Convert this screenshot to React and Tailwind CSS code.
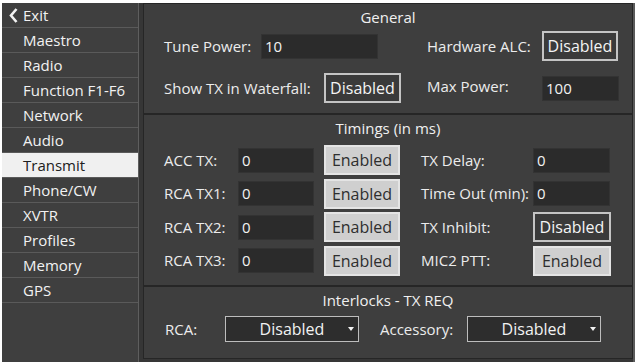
import React from "react";

const font = { fontFamily: '"Open Sans", "Liberation Sans", sans-serif' };

const navItems = [
  "Maestro",
  "Radio",
  "Function F1-F6",
  "Network",
  "Audio",
  "Transmit",
  "Phone/CW",
  "XVTR",
  "Profiles",
  "Memory",
  "GPS",
];

const Field = ({ value, className = "" }) => (
  <div
    className={`h-[25px] bg-[#2b2b2b] border border-[#333333] flex items-center pl-[3px] text-[15px] text-[#f2f2f2] ${className}`}
  >
    {value}
  </div>
);

const DarkButton = ({ children, className = "" }) => (
  <div
    className={`h-[30px] border-2 border-[#c4c4c4] bg-[#3a3a3a] flex items-center justify-center text-[16px] text-[#f4f4f4] ${className}`}
  >
    {children}
  </div>
);

const LightButton = ({ children, className = "" }) => (
  <div
    className={`h-[30px] border-2 border-[#e4e4e4] bg-[#cfcfcf] flex items-center justify-center text-[16px] text-[#2e2e2e] ${className}`}
  >
    {children}
  </div>
);

const Combo = ({ value }) => (
  <div className="relative w-[134px] h-[26px] border border-[#bdbdbd] bg-[#2d2d2d] flex items-center justify-center text-[16px] text-[#f2f2f2]">
    {value}
    <svg className="absolute right-[4px] top-[10px]" width="6" height="4" viewBox="0 0 6 4">
      <path d="M0 0 L6 0 L3 4 Z" fill="#f2f2f2" />
    </svg>
  </div>
);

const Label = ({ children, className = "" }) => (
  <div className={`text-[15px] text-[#ececec] shrink-0 ${className}`}>{children}</div>
);

const Panel = ({ title, className = "", children }) => (
  <div className={`border border-[#262626] bg-[#3e3e3e] flex flex-col ${className}`}>
    <div className="h-[22px] mt-[2px] flex items-center justify-center text-[15px] text-[#f0f0f0]">
      {title}
    </div>
    {children}
  </div>
);

export default function App() {
  return (
    <div
      className="w-[635px] h-[362px] bg-white pt-[3px] pl-[2px] flex overflow-hidden"
      style={font}
    >
      {/* Sidebar */}
      <div className="w-[137px] h-full bg-[#3f3f3f] border-r border-[#5e5e5e] flex flex-col">
        <div className="h-[25px] flex items-center border-b border-[#5a5a5a] text-[15px] text-[#f2f2f2]">
          <svg className="ml-[7px] mr-[5px]" width="9" height="15" viewBox="0 0 9 15">
            <polyline
              points="7.5,1 2,7.5 7.5,14"
              fill="none"
              stroke="#f2f2f2"
              strokeWidth="2.6"
            />
          </svg>
          Exit
        </div>
        {navItems.map((item) => (
          <div
            key={item}
            className={`h-[25px] flex items-center pl-[21px] border-b border-[#5a5a5a] text-[15px] ${
              item === "Transmit" ? "bg-[#f0f0f0] text-[#202020]" : "text-[#f2f2f2]"
            }`}
          >
            {item}
          </div>
        ))}
      </div>

      {/* Gap */}
      <div className="w-[4px] h-full bg-[#363636]" />

      {/* Content */}
      <div className="w-[492px] h-full bg-[#363636] flex flex-col border-r-2 border-[#5a5a5a]">
        <Panel title="General" className="h-[111px]">
          <div className="mt-[3px] flex items-center h-[30px] pl-[20px]">
            <Label className="w-[97px]">Tune Power:</Label>
            <Field value="10" className="w-[117px]" />
            <Label className="w-[115px] ml-[49px]">Hardware ALC:</Label>
            <DarkButton className="w-[76px]">Disabled</DarkButton>
          </div>
          <div className="mt-[12px] flex items-center h-[30px] pl-[20px]">
            <Label className="w-[160px]">Show TX in Waterfall:</Label>
            <DarkButton className="w-[77px]">Disabled</DarkButton>
            <Label className="w-[115px] ml-[26px] -mt-[4px]">Max Power:</Label>
            <Field value="100" className="w-[77px]" />
          </div>
        </Panel>

        <Panel title="Timings (in ms)" className="h-[172px]">
          <div className="mt-[6px] flex flex-col gap-[3.5px] pl-[20px]">
            {[
              ["ACC TX:", "TX Delay:", "field"],
              ["RCA TX1:", "Time Out (min):", "field"],
              ["RCA TX2:", "TX Inhibit:", "dark"],
              ["RCA TX3:", "MIC2 PTT:", "light"],
            ].map(([left, right, kind]) => (
              <div key={left} className="flex items-center h-[30px]">
                <Label className="w-[74px]">{left}</Label>
                <Field value="0" className="w-[76px]" />
                <LightButton className="w-[76px] ml-[10px]">Enabled</LightButton>
                <Label className="w-[112px] ml-[21px]">{right}</Label>
                {kind === "field" && <Field value="0" className="w-[77px]" />}
                {kind === "dark" && <DarkButton className="w-[78px] h-[29px]">Disabled</DarkButton>}
                {kind === "light" && <LightButton className="w-[78px]">Enabled</LightButton>}
              </div>
            ))}
          </div>
        </Panel>

        <Panel title="Interlocks - TX REQ" className="h-[73px]">
          <div className="mt-[5px] flex items-center h-[26px] pl-[21px]">
            <Label className="w-[60px]">RCA:</Label>
            <Combo value="Disabled" />
            <Label className="w-[87px] ml-[21px]">Accessory:</Label>
            <Combo value="Disabled" />
          </div>
        </Panel>
      </div>
    </div>
  );
}
